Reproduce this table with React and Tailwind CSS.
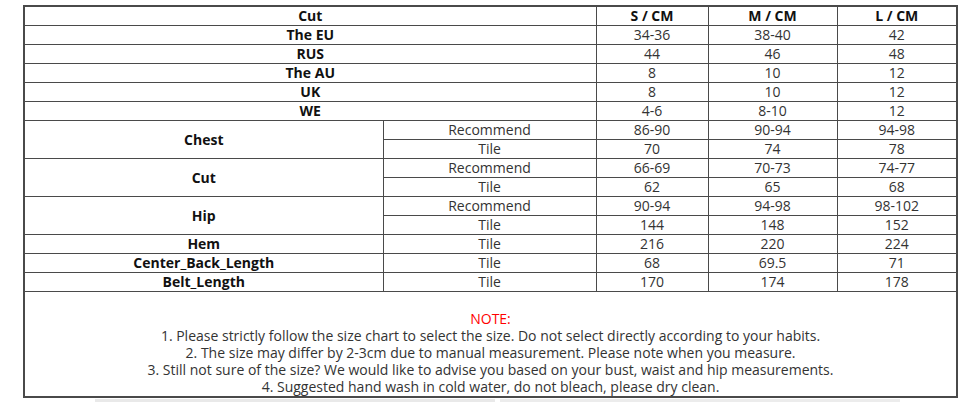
import React from 'react';

const sizes = [
  { name: 'The EU', s: '34-36', m: '38-40', l: '42' },
  { name: 'RUS', s: '44', m: '46', l: '48' },
  { name: 'The AU', s: '8', m: '10', l: '12' },
  { name: 'UK', s: '8', m: '10', l: '12' },
  { name: 'WE', s: '4-6', m: '8-10', l: '12' },
];

const measures = [
  {
    name: 'Chest',
    rows: [
      { type: 'Recommend', s: '86-90', m: '90-94', l: '94-98' },
      { type: 'Tile', s: '70', m: '74', l: '78' },
    ],
  },
  {
    name: 'Cut',
    rows: [
      { type: 'Recommend', s: '66-69', m: '70-73', l: '74-77' },
      { type: 'Tile', s: '62', m: '65', l: '68' },
    ],
  },
  {
    name: 'Hip',
    rows: [
      { type: 'Recommend', s: '90-94', m: '94-98', l: '98-102' },
      { type: 'Tile', s: '144', m: '148', l: '152' },
    ],
  },
  { name: 'Hem', rows: [{ type: 'Tile', s: '216', m: '220', l: '224' }] },
  { name: 'Center_Back_Length', rows: [{ type: 'Tile', s: '68', m: '69.5', l: '71' }] },
  { name: 'Belt_Length', rows: [{ type: 'Tile', s: '170', m: '174', l: '178' }] },
];

const notes = [
  '1. Please strictly follow the size chart to select the size. Do not select directly according to your habits.',
  '2. The size may differ by 2-3cm due to manual measurement. Please note when you measure.',
  '3. Still not sure of the size? We would like to advise you based on your bust, waist and hip measurements.',
  '4. Suggested hand wash in cold water, do not bleach, please dry clean.',
];

const cell = 'border border-[#4a4a4a] h-[19px] p-0 text-center align-middle leading-[17px]';
const label = cell + ' font-bold text-[#111]';
const value = cell + ' text-[#333]';

export default function App() {
  return (
    <div className="w-[971px] h-[402px] overflow-hidden bg-white pt-[5px] pl-[23px] font-['Open_Sans',sans-serif] text-[14px]">
      <table className="w-[933px] table-fixed border-collapse border-2 border-[#4a4a4a]">
        <colgroup>
          <col className="w-[359px]" />
          <col className="w-[213px]" />
          <col className="w-[112px]" />
          <col className="w-[129px]" />
          <col className="w-[120px]" />
        </colgroup>
        <tbody>
          <tr>
            <td colSpan={2} className={label}>Cut</td>
            <td className={label}>S / CM</td>
            <td className={label}>M / CM</td>
            <td className={label}>L / CM</td>
          </tr>
          {sizes.map((row) => (
            <tr key={row.name}>
              <td colSpan={2} className={label}>{row.name}</td>
              <td className={value}>{row.s}</td>
              <td className={value}>{row.m}</td>
              <td className={value}>{row.l}</td>
            </tr>
          ))}
          {measures.map((m) =>
            m.rows.map((r, i) => (
              <tr key={m.name + r.type}>
                {i === 0 && (
                  <td rowSpan={m.rows.length} className={label}>{m.name}</td>
                )}
                <td className={value}>{r.type}</td>
                <td className={value}>{r.s}</td>
                <td className={value}>{r.m}</td>
                <td className={value}>{r.l}</td>
              </tr>
            ))
          )}
          <tr>
            <td colSpan={5} className="border border-[#4a4a4a] pt-[18px] pb-[1px] text-center text-[14px] leading-[17px] text-[#333]">
              <div className="text-[#f00]">NOTE:</div>
              {notes.map((n) => (
                <div key={n}>{n}</div>
              ))}
            </td>
          </tr>
        </tbody>
      </table>
      <div className="mt-[1px] flex gap-[5px] pl-[72px]">
        <div className="h-[6px] w-[400px] bg-[#e9e9e9]" />
        <div className="h-[6px] w-[400px] bg-[#ececec]" />
      </div>
    </div>
  );
}
